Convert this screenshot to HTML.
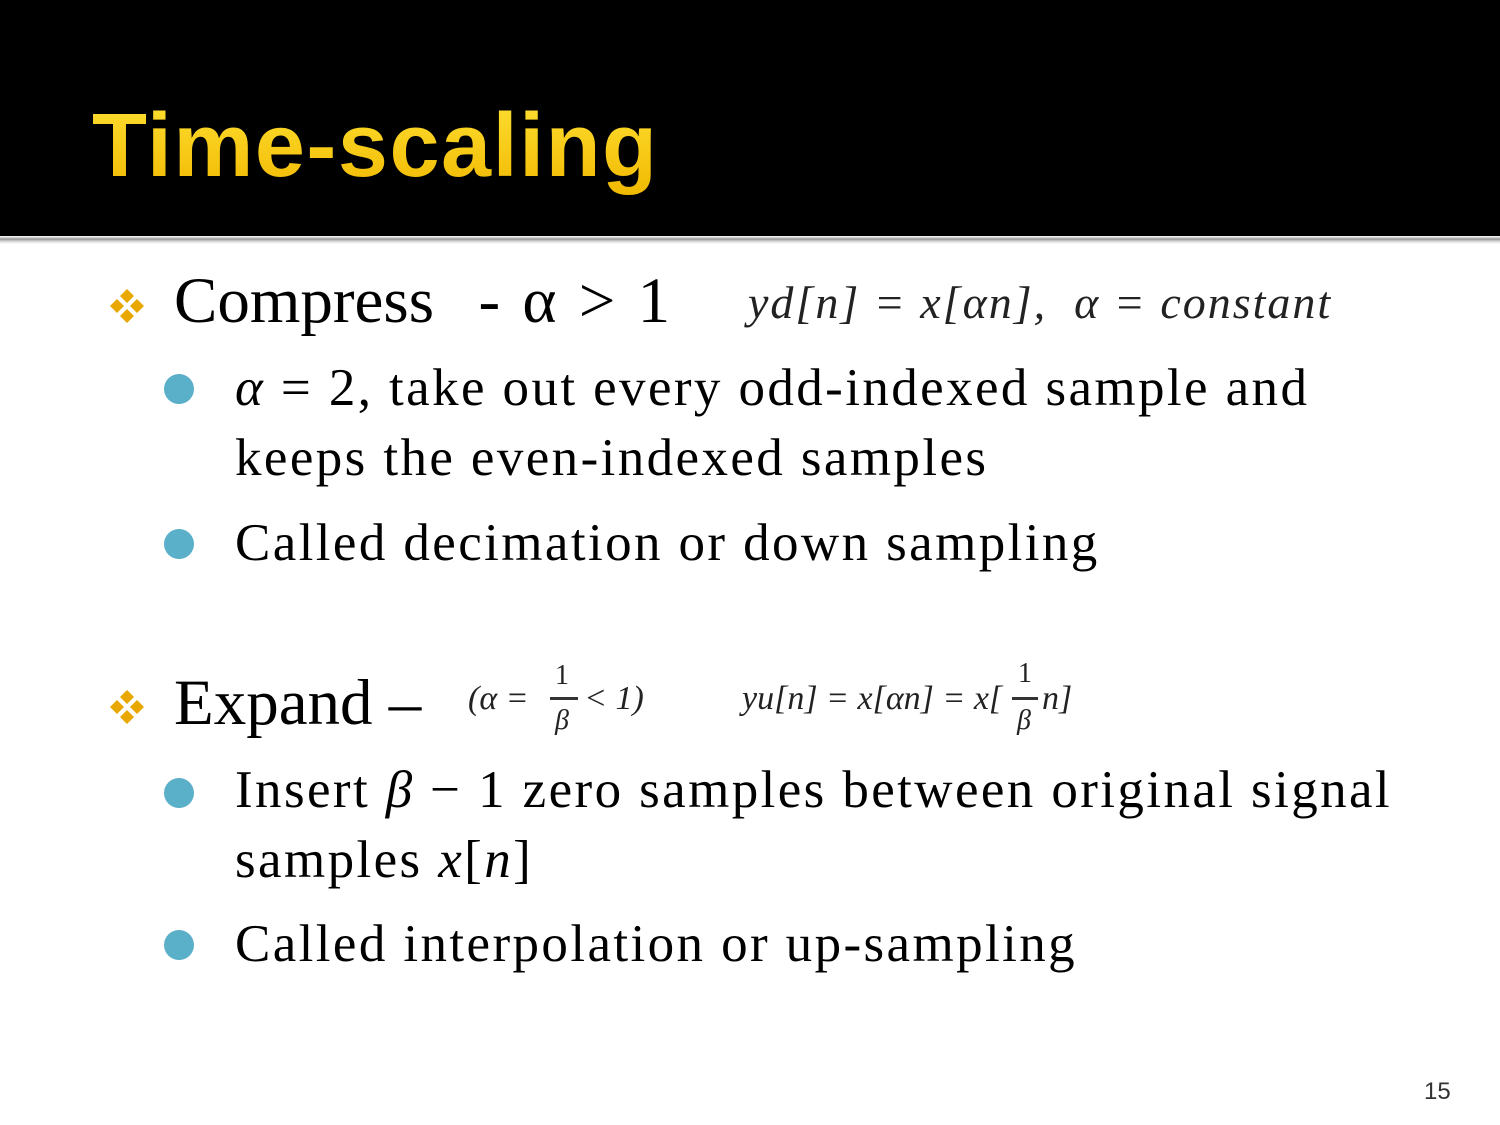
<!DOCTYPE html>
<html><head><style>
body{margin:0;width:1500px;height:1125px;background:#fff;position:relative;overflow:hidden;font-family:"Liberation Serif",serif;color:#000}
.hdr{position:absolute;left:0;top:0;width:1500px;height:236px;background:#000}
.line{position:absolute;left:0;top:236px;width:1500px;height:8px;background:linear-gradient(#fff,#999 40%,#ddd 70%,#fff)}
.title{position:absolute;left:92px;top:95px;font:bold 90px "Liberation Sans",sans-serif;color:#f5c400;background:linear-gradient(#ffe033,#f0b800);-webkit-background-clip:text;background-clip:text;-webkit-text-fill-color:transparent;letter-spacing:1.5px}
.t{position:absolute;white-space:nowrap}
.l1{font-size:65px}
.l2{font-size:53px;letter-spacing:2.4px}
.dot{position:absolute;width:30px;height:30px;border-radius:50%;background:#5aafc9}
.eq{position:absolute;font-family:"Liberation Serif",serif;font-style:italic;color:#222;white-space:nowrap}
.dia{position:absolute;width:38px;height:38px}
</style></head><body>
<div class="hdr"></div><div class="line"></div>
<div class="title">Time-scaling</div>

<svg class="dia" style="left:108px;top:287px" viewBox="0 0 38 38"><g fill="#e8a800"><path d="M19 2l7 7-7 7-7-7z"/><path d="M19 22l7 7-7 7-7-7z"/><path d="M9 12l7 7-7 7-7-7z"/><path d="M29 12l7 7-7 7-7-7z"/></g></svg>
<div class="t l1" style="left:174px;top:264px;word-spacing:6px">Compress &nbsp;- α &gt; 1</div>
<div class="eq" style="left:748px;top:276px;font-size:46px;letter-spacing:2px">yd[n] = x[αn], &nbsp;α = constant</div>

<div class="dot" style="left:164px;top:374px"></div>
<div class="t l2" style="left:235px;top:358px"><i>α</i> = 2, take out every odd-indexed sample and</div>
<div class="t l2" style="left:235px;top:428px">keeps the even-indexed samples</div>
<div class="dot" style="left:164px;top:529px"></div>
<div class="t l2" style="left:235px;top:513px">Called decimation or down sampling</div>

<svg class="dia" style="left:108px;top:688px" viewBox="0 0 38 38"><g fill="#e8a800"><path d="M19 2l7 7-7 7-7-7z"/><path d="M19 22l7 7-7 7-7-7z"/><path d="M9 12l7 7-7 7-7-7z"/><path d="M29 12l7 7-7 7-7-7z"/></g></svg>
<div class="t l1" style="left:174px;top:666px">Expand –</div>
<div class="eq" style="left:468px;top:680px;font-size:34px">(α =</div>
<div class="eq" style="left:555px;top:660px;font-size:28px;font-style:normal">1</div>
<div style="position:absolute;left:550px;top:697px;width:28px;height:3px;background:#333"></div>
<div class="eq" style="left:555px;top:705px;font-size:28px">β</div>
<div class="eq" style="left:584px;top:680px;font-size:34px">&lt; 1)</div>
<div class="eq" style="left:742px;top:680px;font-size:34px">yu[n] = x[αn] = x[</div>
<div class="eq" style="left:1018px;top:658px;font-size:28px;font-style:normal">1</div>
<div style="position:absolute;left:1012px;top:697px;width:26px;height:3px;background:#333"></div>
<div class="eq" style="left:1017px;top:705px;font-size:28px">β</div>
<div class="eq" style="left:1042px;top:680px;font-size:34px">n]</div>

<div class="dot" style="left:164px;top:778px"></div>
<div class="t l2" style="left:235px;top:760px">Insert <i>β</i> − 1 zero samples between original signal</div>
<div class="t l2" style="left:235px;top:830px">samples <i>x</i>[<i>n</i>]</div>
<div class="dot" style="left:164px;top:930px"></div>
<div class="t l2" style="left:235px;top:914px">Called interpolation or up-sampling</div>

<div class="t" style="left:1424px;top:1078px;font:24px 'Liberation Sans',sans-serif;color:#333">15</div>
</body></html>
